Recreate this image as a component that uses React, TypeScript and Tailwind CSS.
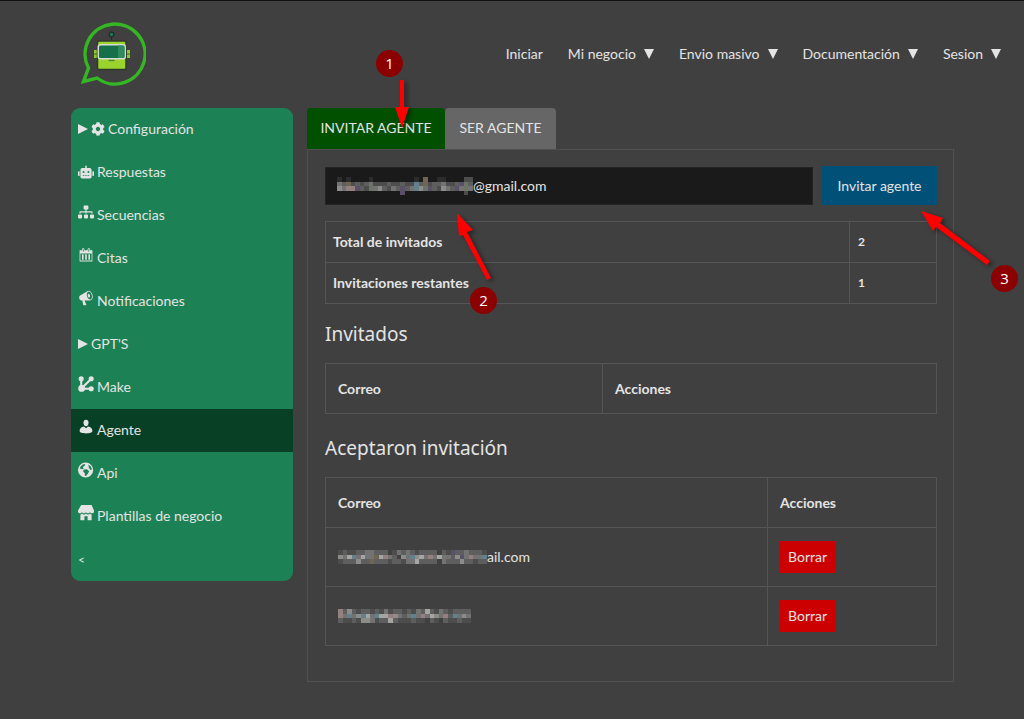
import type { ReactNode } from 'react';
import { FaCog, FaRobot, FaSitemap } from 'react-icons/fa';

const palette: Record<string, string> = {
  k: '#2c2c2c',
  a: '#4d4d4d',
  b: '#5e5e5e',
  c: '#737373',
  d: '#8c8c8a',
  e: '#a5a5a3',
  p: '#94807e',
  t: '#64808a',
  v: '#5a5166',
  o: '#6e6554',
  g: '#6c746a',
};

const inviteMask = [
  'k.k....k.........k.o..kk....aa',
  'cboababgaaabaabaatboabbcaabvgb',
  'dcppvbagcdbacbvbctdgvbadcbvcgc',
  '..............v.............a.',
];

const acceptedMasks = [
  [
    'abaabbccbbb.acbcbabbbb.bavbbcbbba',
    'dcetceccoepcb.dctdecpceccbdvcpcct',
    'abbbdbbobbbabbaccebbbb.cbbbdbbabb',
  ],
  [
    'pbdbabbabacabbabacbebacbabbbb',
    'pctcdtecteepdcbctcpcedcpbtcdc',
    'baabaddcabbebaaabaa.ba.baabaa',
  ],
];

const navItems = [
  { label: 'Iniciar', menu: false },
  { label: 'Mi negocio', menu: true },
  { label: 'Envio masivo', menu: true },
  { label: 'Documentación', menu: true },
  { label: 'Sesion', menu: true },
];

function Mosaic({ rows, className = '' }: { rows: string[]; className?: string }) {
  const cols = rows[0].length;
  return (
    <svg
      viewBox={`0 0 ${cols} ${rows.length}`}
      preserveAspectRatio="none"
      shapeRendering="crispEdges"
      className={className}
      aria-hidden="true"
    >
      {rows.map((row, y) =>
        row.split('').map((key, x) =>
          palette[key] ? <rect key={`${x}-${y}`} x={x} y={y} width="1" height="1" fill={palette[key]} /> : null,
        ),
      )}
    </svg>
  );
}

function Glyph({ children }: { children: ReactNode }) {
  return (
    <svg viewBox="0 0 20 20" fill="currentColor" className="w-4 h-4 mb-1.5" aria-hidden="true">
      {children}
    </svg>
  );
}

function CalendarIcon() {
  return (
    <Glyph>
      <path d="M15 4h3v14H2V4h3V3c0-.83.67-1.5 1.5-1.5S8 2.17 8 3v1h4V3c0-.83.67-1.5 1.5-1.5S15 2.17 15 3v1zM6 3v2.5c0 .28.22.5.5.5s.5-.22.5-.5V3c0-.28-.22-.5-.5-.5S6 2.72 6 3zm7 0v2.5c0 .28.22.5.5.5s.5-.22.5-.5V3c0-.28-.22-.5-.5-.5s-.5.22-.5.5zm4 14V8H3v9h14zM7 16V9H5v7h2zm4 0V9H9v7h2zm4 0V9h-2v7h2z" />
    </Glyph>
  );
}

function MegaphoneIcon() {
  return (
    <Glyph>
      <path d="M18.15 5.94c.46 1.62.38 3.22-.02 4.48-.42 1.28-1.26 2.18-2.3 2.48-.16.06-.26.06-.4.06-.06.02-.12.02-.18.02-.06.02-.14.02-.22.02h-6.8l2.22 5.5c.02.14-.06.26-.14.34-.08.1-.24.16-.34.16H6.95c-.1 0-.26-.06-.34-.16-.08-.08-.16-.2-.14-.34l-1-5.5H4.25l-.02-.02c-.5.06-1.08-.18-1.54-.62s-.88-1.08-1.06-1.88c-.24-.8-.2-1.56-.02-2.2.18-.62.58-1.08 1.06-1.3l.02-.02 9-5.4c.1-.06.18-.1.24-.16.06-.04.14-.08.24-.12.16-.08.28-.12.5-.18 1.04-.3 2.24.1 3.22.98s1.84 2.24 2.26 3.86zm-2.58 5.98h-.02c.4-.1.74-.34 1.04-.7.58-.7.86-1.76.86-3.04 0-.64-.1-1.3-.28-1.98-.34-1.36-1.02-2.5-1.78-3.24s-1.68-1.1-2.46-.88c-.82.22-1.4.96-1.7 2-.32 1.04-.28 2.36.06 3.72.38 1.36 1 2.5 1.8 3.24.78.74 1.62 1.1 2.48.88zm-2.54-7.08c.22-.04.42-.02.62.04.38.16.76.48 1.02 1s.42 1.2.42 1.78c0 .3-.04.56-.12.8-.18.48-.44.84-.86.94-.34.1-.8-.06-1.14-.4s-.64-.86-.78-1.5c-.18-.62-.12-1.24.02-1.72s.48-.84.82-.94z" />
    </Glyph>
  );
}

function NodesIcon() {
  return (
    <Glyph>
      <path d="M4 4v12h12M4 16L16 4" fill="none" stroke="currentColor" strokeWidth="2.6" />
      <circle cx="4" cy="3.5" r="3.2" />
      <circle cx="16.5" cy="3.5" r="3.2" />
      <circle cx="4.5" cy="15.5" r="4.2" />
      <circle cx="16.5" cy="16" r="3.2" />
    </Glyph>
  );
}

function PersonIcon() {
  return (
    <Glyph>
      <path d="M10 1c2 0 3.2 1.5 3.2 3.6S11.800 9 10 9 6.800 6.700 6.800 4.600 8 1 10 1z" />
      <path d="M7.500 9.500L10 11.500l2.500-2c3.500.6 5.500 2.500 5.500 5.500 0 2.200-3.500 3-8 3s-8-.8-8-3c0-3 2-4.900 5.500-5.500z" />
    </Glyph>
  );
}

function GlobeIcon() {
  return (
    <Glyph>
      <path
        fillRule="evenodd"
        d="M9.500.500a9.500 9.500 0 100 19 9.500 9.500 0 000-19zM3 6l3-3 3-.5-.5 2L6 6.500l1 2-2 .5-2.500-1zM7 9.500l4-.5 3 2.500-1.500 3-2.500 3-1.500-.5v-3L6.500 12zM13 3l3 2.500 1.500 4-2 .5-2-3z"
      />
    </Glyph>
  );
}

function StoreIcon() {
  return (
    <Glyph>
      <path d="M1 10c.41.29.96.43 1.500.43.55 0 1.090-.14 1.500-.43.62-.46 1-1.170 1-2 0 .83.37 1.540 1 2 .41.29.96.43 1.500.43.55 0 1.090-.14 1.500-.43.62-.46 1-1.170 1-2 0 .83.37 1.540 1 2 .41.29.96.43 1.510.43.54 0 1.080-.14 1.490-.43.62-.46 1-1.170 1-2 0 .83.37 1.540 1 2 .41.29.96.43 1.500.43.55 0 1.090-.14 1.500-.43.63-.46 1-1.170 1-2V7l-3-7H4L0 7v1c0 .83.37 1.540 1 2zm2 8.990h5v-5h4v5h5v-7c-.37-.05-.72-.22-1-.43-.63-.45-1-.73-1-1.560 0 .83-.38 1.110-1 1.560-.41.3-.95.43-1.490.44-.55 0-1.100-.14-1.510-.44-.63-.45-1-.73-1-1.560 0 .83-.38 1.110-1 1.560-.41.3-.95.43-1.500.44-.54 0-1.090-.14-1.500-.44-.63-.45-1-.73-1-1.570 0 .84-.38 1.120-1 1.570-.29.21-.63.38-1 .44v6.990z" />
    </Glyph>
  );
}

const sideItems: { label: string; icon?: ReactNode; expandable?: boolean; active?: boolean }[] = [
  { label: 'Configuración', icon: <FaCog className="w-3.5 h-3.5" />, expandable: true },
  { label: 'Respuestas', icon: <FaRobot className="w-4 h-4" /> },
  { label: 'Secuencias', icon: <FaSitemap className="w-4 h-4 mb-1.5" /> },
  { label: 'Citas', icon: <CalendarIcon /> },
  { label: 'Notificaciones', icon: <MegaphoneIcon /> },
  { label: "GPT'S", expandable: true },
  { label: 'Make', icon: <NodesIcon /> },
  { label: 'Agente', icon: <PersonIcon />, active: true },
  { label: 'Api', icon: <GlobeIcon /> },
  { label: 'Plantillas de negocio', icon: <StoreIcon /> },
];

function Triangle({ down = false }: { down?: boolean }) {
  return (
    <svg viewBox="0 0 10 10" fill="currentColor" className="w-2.5 h-2.5 shrink-0" aria-hidden="true">
      <path d={down ? 'M0 0h10L5 10z' : 'M0 0v10l10-5z'} />
    </svg>
  );
}

function Logo() {
  return (
    <svg viewBox="0 0 66 66" className="w-[66px] h-[66px]" role="img" aria-label="Bot">
      <path
        d="M8.500 47A30 30 0 1 1 17 57L3.500 60.500z"
        fill="none"
        stroke="#35b724"
        strokeWidth="3.400"
      />
      <path d="M31.500 14v7" stroke="#252b2b" strokeWidth="1.200" />
      <circle cx="31.500" cy="13.500" r="2.300" fill="#197a50" stroke="#252b2b" strokeWidth="1.200" />
      <path d="M14 29h3v8h-3zM47 29h3v8h-3z" fill="#8ac926" />
      <path d="M14 33h3M47 33h3" stroke="#37501c" strokeWidth="0.800" />
      <rect x="17.500" y="20" width="28.500" height="28.500" rx="1.500" fill="#9bd32e" stroke="#30382b" strokeWidth="1.500" />
      <rect x="17.500" y="23" width="28.500" height="15.500" rx="3" fill="#d5dcd6" />
      <rect x="19" y="24.500" width="25.500" height="12.500" rx="1.500" fill="#15704a" />
      <path d="M38 24.500h5q1.500 0 1.500 1.500v9.500q0 1.500-1.500 1.500h-5z" fill="#2f8b5d" />
      <path d="M28.500 39.500h6" stroke="#5f812b" strokeWidth="1.400" />
    </svg>
  );
}

function Header() {
  return (
    <header className="flex items-center justify-between pt-5 pb-[21px] pl-20 pr-[23px]">
      <a href="#inicio">
        <Logo />
      </a>
      <nav className="flex items-center gap-[25px]">
        {navItems.map(item => (
          <a key={item.label} href="#menu" className="flex items-center gap-2 whitespace-nowrap">
            {item.label}
            {item.menu && <Triangle down />}
          </a>
        ))}
      </nav>
    </header>
  );
}

function Sidebar() {
  return (
    <aside className="w-[222px] shrink-0 self-start rounded-[9px] overflow-hidden bg-[#1c8154]">
      <nav>
        {sideItems.map(item => (
          <a
            key={item.label}
            href="#seccion"
            className={`flex items-center gap-[3px] h-[43px] px-[7px] pb-0.5 ${item.active ? 'bg-[#084026]' : ''}`}
          >
            {item.expandable && <Triangle />}
            {item.icon}
            {item.label}
          </a>
        ))}
        <button className="flex items-center h-[43px] px-[7px] text-xs" aria-label="Contraer menú">
          &lt;
        </button>
      </nav>
    </aside>
  );
}

function InvitePanel() {
  const cell = 'border border-[#555555] text-left';
  return (
    <section className="border border-[#505050] pl-[17px] pr-4 pt-4 pb-[35px]">
      <form className="flex items-center gap-[9px]" onSubmit={e => e.preventDefault()}>
        <div className="relative flex-1">
          <input
            aria-label="Correo del agente"
            defaultValue="@gmail.com"
            className="block w-full h-[38px] pl-[147px] pr-3 bg-[#1a1a1a] border border-[#242424] outline-none"
          />
          <Mosaic rows={inviteMask} className="absolute left-3 top-2.5 w-[136px] h-[18px]" />
        </div>
        <button className="w-[115px] h-[39px] bg-[#005078]">Invitar agente</button>
      </form>

      <table className="w-full mt-4 border-collapse">
        <tbody>
          <tr className="h-[41px]">
            <th className={`${cell} px-[7px]`}>Total de invitados</th>
            <td className={`${cell} w-[87px] px-2 text-xs font-bold`}>2</td>
          </tr>
          <tr className="h-[41px]">
            <th className={`${cell} px-[7px]`}>Invitaciones restantes</th>
            <td className={`${cell} w-[87px] px-2 text-xs font-bold`}>1</td>
          </tr>
        </tbody>
      </table>

      <h2 className="mt-4 mb-[15px] text-[19px] leading-7 font-['Noto_Sans',sans-serif]">Invitados</h2>
      <table className="w-full border-collapse">
        <thead>
          <tr className="h-[50px]">
            <th className={`${cell} px-3 w-[277px]`}>Correo</th>
            <th className={`${cell} px-3`}>Acciones</th>
          </tr>
        </thead>
      </table>

      <h2 className="mt-5 mb-[15px] text-[19px] leading-7 font-['Noto_Sans',sans-serif]">Aceptaron invitación</h2>
      <table className="w-full border-collapse">
        <thead>
          <tr className="h-[50px]">
            <th className={`${cell} px-3`}>Correo</th>
            <th className={`${cell} px-3 w-[169px]`}>Acciones</th>
          </tr>
        </thead>
        <tbody>
          {acceptedMasks.map((mask, i) => (
            <tr key={i} className="h-[59px]">
              <td className={`${cell} px-3`}>
                <div className="flex items-center">
                  <Mosaic rows={mask} className={i === 0 ? 'w-[149px] h-[14px]' : 'w-[133px] h-[14px]'} />
                  {i === 0 && 'ail.com'}
                </div>
              </td>
              <td className={`${cell} px-3`}>
                <button className="block h-8 px-2 bg-[#cc0000]">Borrar</button>
              </td>
            </tr>
          ))}
        </tbody>
      </table>
    </section>
  );
}

function Annotations() {
  const badge =
    "absolute w-[27px] h-[27px] rounded-full bg-[#8b0000] text-white text-[15px] flex items-center justify-center font-['Open_Sans',sans-serif]";
  return (
    <div className="absolute left-0 -top-px pointer-events-none">
      <svg width="1024" height="719" viewBox="0 0 1024 719" className="max-w-none drop-shadow-[3px_2px_2px_#00000066]" aria-hidden="true">
        <g fill="#ff0000">
          <path d="M400 80h4v27h5l-7 21-7-21h5z" />
          <path d="M457 213l16 17-6 2 24 46-4 2-24-45-4 1z" />
          <path d="M921 211l22 7-3 5 50 38-3 4-51-38-3 4z" />
        </g>
      </svg>
      <span className={`${badge} left-[376px] top-[50px]`}>1</span>
      <span className={`${badge} left-[470px] top-[287px]`}>2</span>
      <span className={`${badge} left-[991px] top-[265px]`}>3</span>
    </div>
  );
}

export default function App() {
  return (
    <div className="relative min-h-screen overflow-hidden bg-[#404040] border-t border-[#111111] text-[#e4e4e4] text-sm font-['Lato',sans-serif]">
      <Header />
      <main className="flex gap-3.5 pl-[71px] pr-[70px] pb-9">
        <Sidebar />
        <div className="flex-1 min-w-0">
          <div className="flex" role="tablist">
            <button role="tab" aria-selected="true" className="w-[138px] h-[41px] pb-0.5 rounded-t bg-[#005000]">
              INVITAR AGENTE
            </button>
            <button role="tab" aria-selected="false" className="w-[111px] h-[41px] pb-0.5 rounded-t bg-[#666666]">
              SER AGENTE
            </button>
          </div>
          <InvitePanel />
        </div>
      </main>
      <Annotations />
    </div>
  );
}
